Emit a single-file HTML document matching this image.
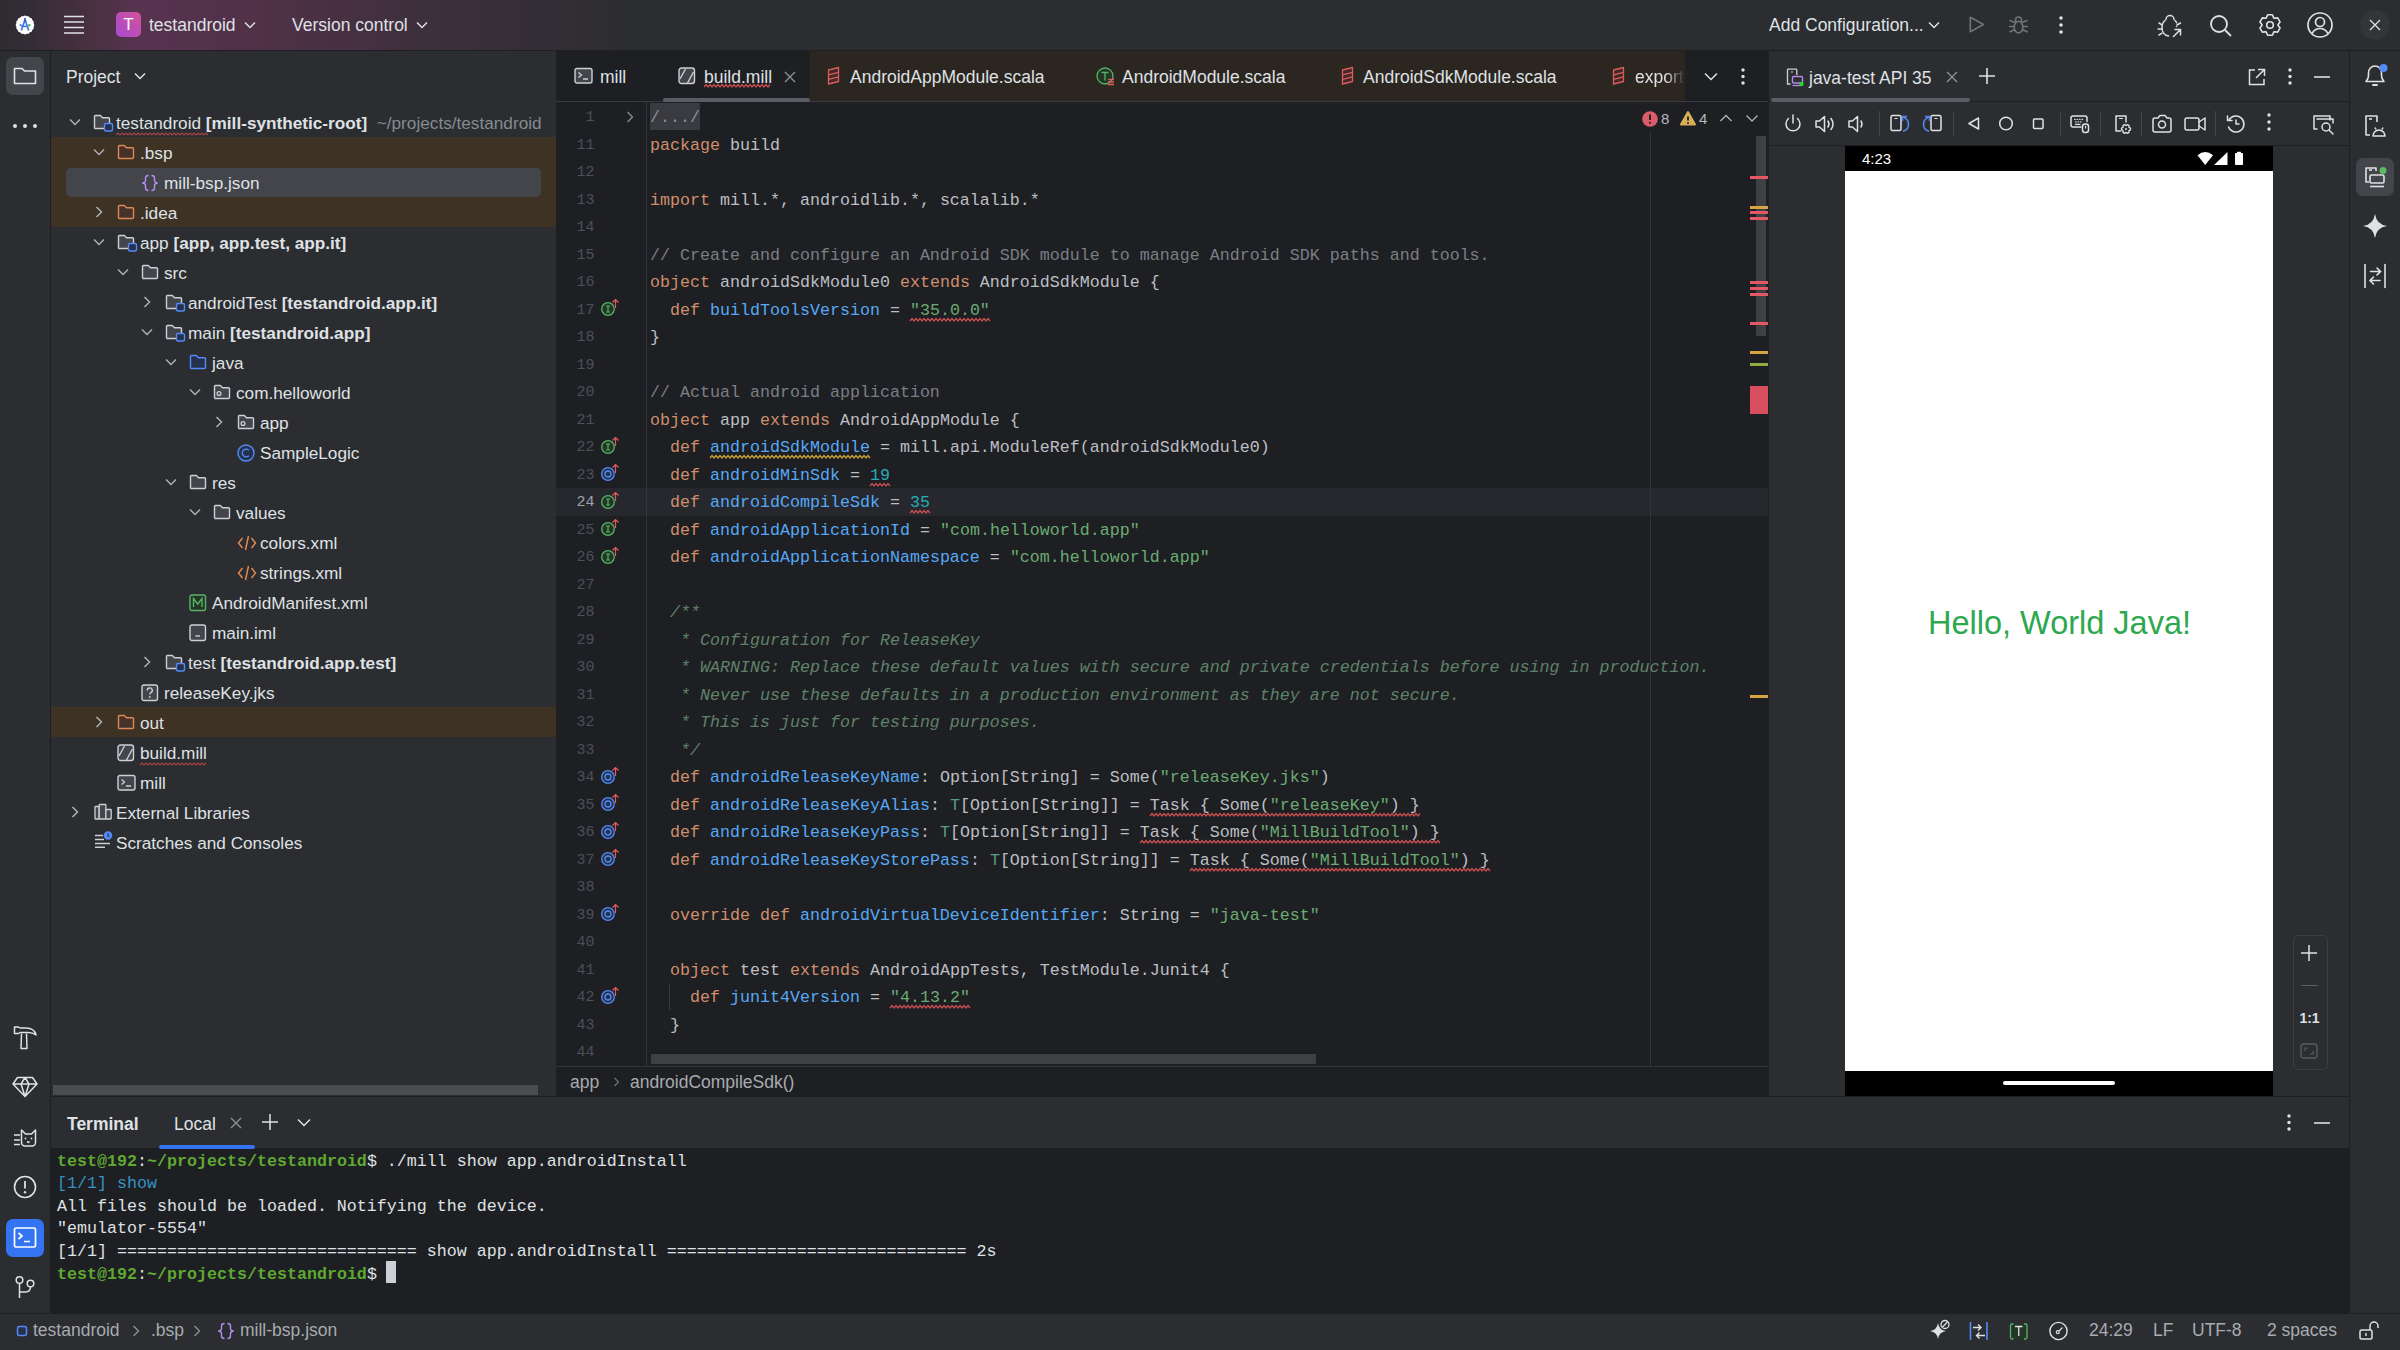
<!DOCTYPE html><html><head><meta charset="utf-8"><style>
*{margin:0;padding:0;box-sizing:border-box}
html,body{width:2400px;height:1350px;overflow:hidden;background:#2b2d30}
body{position:relative;font-family:"Liberation Sans",sans-serif;font-size:17.5px;color:#dfe1e5}
.a{position:absolute}
.mono{font-family:"Liberation Mono",monospace}
svg{position:absolute;overflow:visible}
#title{left:0;top:0;width:2400px;height:50px;background:#2b2d30}
#titlegrad{left:0;top:0;width:700px;height:50px;background:linear-gradient(90deg,#2d2c31 0px,#342d35 30px,#46303f 85px,#573350 135px,#4f3147 270px,#3d2f3c 430px,#2b2d30 640px)}
.hline{position:absolute;height:1px;background:#1e1f22}
.vline{position:absolute;width:1px;background:#1e1f22}
#lstripe{left:0;top:51px;width:50px;height:1263px;background:#2b2d30}
#proj{left:51px;top:51px;width:505px;height:1046px;background:#2b2d30;overflow:hidden}
#editor{left:556px;top:51px;width:1213px;height:1046px;background:#1e1f22;overflow:hidden}
#emu{left:1770px;top:51px;width:579px;height:1046px;background:#2b2d30;overflow:hidden}
#rstripe{left:2349px;top:51px;width:51px;height:1263px;background:#2b2d30}
#term{left:51px;top:1097px;width:2298px;height:217px;background:#1e1f22}
#status{left:0;top:1314px;width:2400px;height:36px;background:#2b2d30}
.row{position:absolute;left:0;height:30px;line-height:30px;white-space:pre;width:505px;font-size:17.2px}
.b{font-weight:bold}
.code{position:absolute;left:94px;white-space:pre;font-family:"Liberation Mono",monospace;font-size:16.67px;color:#bcbec4;height:27.5px;line-height:27.5px}
.ln{position:absolute;width:40px;text-align:right;font-family:"Liberation Mono",monospace;font-size:15px;color:#4b5059;height:27.5px;line-height:27.5px}
.k{color:#cf8e6d}.s{color:#6aab73}.n{color:#2aacb8}.f{color:#56a8f5}.c{color:#7a7e85}.d{color:#5f826b;font-style:italic}.t{color:#5a9c84}
.tline{position:absolute;left:6px;white-space:pre;font-family:"Liberation Mono",monospace;font-size:16.67px;color:#dfe1e5;height:22.6px;line-height:22.6px}
</style></head><body>
<div id="title" class="a"></div><div id="titlegrad" class="a"></div>
<div class="hline" style="left:0;top:50px;width:2400px"></div>
<svg style="left:0;top:0" width="50" height="50"><path d="M34.40 25.00 L33.63 26.72 L33.68 28.60 L32.32 29.89 L31.65 31.65 L29.89 32.32 L28.60 33.68 L26.72 33.63 L25.00 34.40 L23.28 33.63 L21.40 33.68 L20.11 32.32 L18.35 31.65 L17.68 29.89 L16.32 28.60 L16.37 26.72 L15.60 25.00 L16.37 23.28 L16.32 21.40 L17.68 20.11 L18.35 18.35 L20.11 17.68 L21.40 16.32 L23.28 16.37 L25.00 15.60 L26.72 16.37 L28.60 16.32 L29.89 17.68 L31.65 18.35 L32.32 20.11 L33.68 21.40 L33.63 23.28 Z" fill="#ffffff"/><path d="M21.3 30.5 L25 19.8 L28.7 30.5" stroke="#3b78e7" stroke-width="1.7" fill="none"/><path d="M19.8 24.3 q1.5 2.5 7.2 2" stroke="#3b78e7" stroke-width="1.5" fill="none"/><rect x="24" y="18" width="2" height="2.5" fill="#3b78e7"/><path d="M23.8 21 h2.4" stroke="#333" stroke-width="0.8"/><circle cx="29.3" cy="25.3" r="1.2" fill="#4caf50"/></svg>
<svg style="left:0;top:0" width="100" height="50"><g stroke="#dfe1e5" stroke-width="1.6"><path d="M64 16.5h20M64 22h20M64 27.5h20M64 33h20"/></g></svg>
<div class="a" style="left:116px;top:12px;width:25px;height:25px;border-radius:5px;background:linear-gradient(225deg,#d4509a,#a64bd0);color:#fff;font-size:17px;text-align:center;line-height:25px">T</div>
<div class="a" style="left:149px;top:13px;font-size:17.5px;line-height:24px">testandroid</div>
<svg style="left:244px;top:21px" width="12" height="8"><path d="M1 1.5 L6 6.5 L11 1.5" stroke="#dfe1e5" stroke-width="1.5" fill="none"/></svg>
<div class="a" style="left:292px;top:13px;font-size:17.5px;line-height:24px">Version control</div>
<svg style="left:416px;top:21px" width="12" height="8"><path d="M1 1.5 L6 6.5 L11 1.5" stroke="#dfe1e5" stroke-width="1.5" fill="none"/></svg>
<div class="a" style="left:1769px;top:13px;font-size:17.5px;line-height:24px">Add Configuration...</div>
<svg style="left:1928px;top:21px" width="12" height="8"><path d="M1 1.5 L6 6.5 L11 1.5" stroke="#dfe1e5" stroke-width="1.5" fill="none"/></svg>
<svg style="left:1966px;top:14px" width="22" height="22"><path d="M4.3 3.3 L17.5 10.5 L4.3 17.7 Z" stroke="#6f737a" stroke-width="1.7" fill="none" stroke-linejoin="round"/></svg>
<svg style="left:2007px;top:14px" width="24" height="24"><g stroke="#6f737a" stroke-width="1.6" fill="none" stroke-linecap="round"><path d="M8.5 7.5 v-1.5 a3 3 0 0 1 6 0 v1.5"/><ellipse cx="11.5" cy="13.2" rx="4.3" ry="5.8"/><path d="M3 6.5 L7.2 8.3 M20 6.5 L15.8 8.3 M2.5 12.5 H7 M16 12.5 H20.5 M3 17.8 L7.2 15.8 M20 17.8 L15.8 15.8"/></g></svg>
<svg style="left:2055px;top:14px" width="12" height="24"><g fill="#dfe1e5"><circle cx="6" cy="4" r="1.8"/><circle cx="6" cy="11" r="1.8"/><circle cx="6" cy="18" r="1.8"/></g></svg>
<svg style="left:2156px;top:12px" width="30" height="28"><g stroke="#dfe1e5" stroke-width="1.5" fill="none" stroke-linecap="round"><path d="M10 7.5 a4 4 0 0 1 8 0"/><path d="M9 8.5 c-2 1.5-3 4-3 7 c0 5 3 8 6.5 8.5"/><path d="M19 8.5 c0.7 0.6 1.2 1.3 1.6 2.2 M20.5 14.5 v0"/><path d="M3 11 l3 1.8 M2 17 h4 M3 23 l3-1.8 M24.5 11 l-3.5 2"/><path d="M17.5 24.5 L24.5 17.5 M19 17.5 h5.5 v5.5"/></g></svg>
<svg style="left:2207px;top:12px" width="28" height="28"><g stroke="#dfe1e5" stroke-width="1.8" fill="none"><circle cx="12" cy="12" r="8"/><path d="M18 18 L24 24"/></g></svg>
<svg style="left:2256px;top:11px" width="28" height="28"><g stroke="#dfe1e5" stroke-width="1.6" fill="none" stroke-linejoin="round"><path d="M10.24 6.94 L11.64 3.77 L16.36 3.77 L17.76 6.94 L18.24 7.22 L21.68 6.84 L24.04 10.93 L22.00 13.72 L22.00 14.28 L24.04 17.07 L21.68 21.16 L18.24 20.78 L17.76 21.06 L16.36 24.23 L11.64 24.23 L10.24 21.06 L9.76 20.78 L6.32 21.16 L3.96 17.07 L6.00 14.28 L6.00 13.72 L3.96 10.93 L6.32 6.84 L9.76 7.22 Z"/><circle cx="14" cy="14" r="3.3"/></g></svg>
<svg style="left:2305px;top:11px" width="30" height="30"><g stroke="#dfe1e5" stroke-width="1.7" fill="none"><circle cx="15" cy="14" r="12"/><circle cx="15" cy="11" r="4.5"/><path d="M7 22.5 c2-3.5 5-5 8-5 s6 1.5 8 5"/></g></svg>
<div class="a" style="left:2360px;top:10px;width:30px;height:30px;border-radius:15px;background:#333538"></div>
<svg style="left:2367px;top:17px" width="16" height="16"><path d="M3 3 L13 13 M13 3 L3 13" stroke="#dfe1e5" stroke-width="1.3"/></svg>
<div id="lstripe" class="a"></div><div class="vline" style="left:50px;top:51px;height:1263px"></div>
<div class="a" style="left:6px;top:57px;width:38px;height:38px;border-radius:7px;background:#43454a"></div>
<svg style="left:0;top:51px" width="50" height="50"><path d="M14.5 17.5 h7.5 l2.5 2.5 h11 v12.5 h-21 Z" stroke="#dfe1e5" stroke-width="1.6" fill="none" stroke-linejoin="round"/></svg>
<svg style="left:0;top:116px" width="50" height="20"><g fill="#dfe1e5"><circle cx="15" cy="10" r="2"/><circle cx="25" cy="10" r="2"/><circle cx="35" cy="10" r="2"/></g></svg>
<svg style="left:0;top:1020px" width="50" height="36"><g stroke="#dfe1e5" stroke-width="1.5" fill="none" stroke-linejoin="round"><path d="M14.5 7 h4 l1.5 1 h6 c5 0 9 2.5 10 7 c-2-1.5-4.5-2.5-7.5-2.5 h-8.5 l-1.5 1 h-4 Z"/><path d="M21.5 13.5 l-0.5 15 h6 l-0.5-15"/></g></svg>
<svg style="left:0;top:1070px" width="50" height="36"><g stroke="#dfe1e5" stroke-width="1.5" fill="none" stroke-linejoin="round"><path d="M17.5 7.5 H32.5 L37 14 L25 26.5 L13 14 Z M13 14 H37 M21 14 L25 7.5 L29 14 M21 14 L25 26.5 L29 14"/></g></svg>
<svg style="left:0;top:1120px" width="50" height="36"><g stroke="#dfe1e5" stroke-width="1.5" fill="none" stroke-linejoin="round"><path d="M21.5 10 L25.5 14 H31.5 L35.5 10 V22.5 a3.5 3.5 0 0 1 -3.5 3.5 H25 a3.5 3.5 0 0 1 -3.5-3.5 Z"/><path d="M14 15 h6 M14 20 h6 M14 24.5 h6"/><path d="M27 21.5 l1.3 1 l1.3-1"/></g><circle cx="25.5" cy="18.5" r="0.9" fill="#dfe1e5"/><circle cx="31.5" cy="18.5" r="0.9" fill="#dfe1e5"/></svg>
<svg style="left:0;top:1170px" width="50" height="36"><circle cx="25" cy="17" r="10.5" stroke="#dfe1e5" stroke-width="1.6" fill="none"/><path d="M25 11 v7.5" stroke="#dfe1e5" stroke-width="1.8"/><circle cx="25" cy="22.3" r="1.2" fill="#dfe1e5"/></svg>
<div class="a" style="left:6px;top:1219px;width:38px;height:38px;border-radius:7px;background:#3574f0"></div>
<svg style="left:0;top:1219px" width="50" height="38"><g stroke="#ffffff" stroke-width="1.7" fill="none"><rect x="14.5" y="9" width="21" height="19" rx="1.5"/><path d="M18.5 14 l3.5 3 l-3.5 3 M24 22.5 h6"/></g></svg>
<svg style="left:0;top:1270px" width="50" height="36"><g stroke="#dfe1e5" stroke-width="1.5" fill="none"><circle cx="19.5" cy="10" r="3.3"/><circle cx="30.5" cy="13.5" r="3.3"/><path d="M19.5 13.3 V28 M30.5 16.8 c0 3.2-2 5.2-5 5.2 H19.5"/></g></svg>
<div id="proj" class="a">
<div class="a" style="left:15px;top:14px;font-size:17.5px;line-height:24px">Project</div>
<svg style="left:83px;top:21px" width="12" height="8"><path d="M1 1.5 L6 6.5 L11 1.5" stroke="#dfe1e5" stroke-width="1.5" fill="none"/></svg>
<div class="a" style="left:0;top:86px;width:505px;height:90px;background:#3d3224"></div>
<div class="a" style="left:0;top:656px;width:505px;height:30px;background:#3d3224"></div>
<div class="a" style="left:15px;top:117px;width:475px;height:29px;border-radius:5px;background:#43454a"></div>
<svg style="left:18px;top:67px" width="12" height="8"><path d="M1 1.5 L6 6.5 L11 1.5" stroke="#aeb0b6" stroke-width="1.5" fill="none"/></svg>
<svg style="left:42px;top:63px" width="20" height="18"><path d="M1.5 2.5 a1 1 0 0 1 1-1 h4.8 l2.2 2.2 h6 a1 1 0 0 1 1 1 v8.8 a1 1 0 0 1 -1 1 h-13 a1 1 0 0 1 -1-1 Z" stroke="#ced0d6" stroke-width="1.4" fill="#43454a" stroke-linejoin="round"/><rect x="11.5" y="9.5" width="8" height="7.5" rx="1.5" fill="#25324d" stroke="#548af7" stroke-width="1.4"/></svg>
<div class="row" style="left:65px;top:57px">testandroid<span class="b"> [mill-synthetic-root]</span><span style="color:#868a91">  ~/projects/testandroid</span></div>
<svg style="left:42px;top:97px" width="12" height="8"><path d="M1 1.5 L6 6.5 L11 1.5" stroke="#aeb0b6" stroke-width="1.5" fill="none"/></svg>
<svg style="left:66px;top:93px" width="20" height="18"><path d="M1.5 2.5 a1 1 0 0 1 1-1 h4.8 l2.2 2.2 h6 a1 1 0 0 1 1 1 v8.8 a1 1 0 0 1 -1 1 h-13 a1 1 0 0 1 -1-1 Z" stroke="#e08855" stroke-width="1.4" fill="#45322b" stroke-linejoin="round"/></svg>
<div class="row" style="left:89px;top:87px">.bsp</div>
<svg style="left:90px;top:123px" width="20" height="18"><path d="M7.5 1.5 c-2 0-3 0.8-3 2.5 v2.5 c0 1.3-0.9 2.2-2.8 2.5 c1.9 0.3 2.8 1.2 2.8 2.5 v2.5 c0 1.7 1 2.5 3 2.5 M10.5 1.5 c2 0 3 0.8 3 2.5 v2.5 c0 1.3 0.9 2.2 2.8 2.5 c-1.9 0.3-2.8 1.2-2.8 2.5 v2.5 c0 1.7-1 2.5-3 2.5" stroke="#b68bf0" stroke-width="1.4" fill="none" stroke-linejoin="round"/></svg>
<div class="row" style="left:113px;top:117px">mill-bsp.json</div>
<svg style="left:44px;top:155px" width="8" height="12"><path d="M1.5 1 L6.5 6 L1.5 11" stroke="#aeb0b6" stroke-width="1.5" fill="none"/></svg>
<svg style="left:66px;top:153px" width="20" height="18"><path d="M1.5 2.5 a1 1 0 0 1 1-1 h4.8 l2.2 2.2 h6 a1 1 0 0 1 1 1 v8.8 a1 1 0 0 1 -1 1 h-13 a1 1 0 0 1 -1-1 Z" stroke="#e08855" stroke-width="1.4" fill="#45322b" stroke-linejoin="round"/></svg>
<div class="row" style="left:89px;top:147px">.idea</div>
<svg style="left:42px;top:187px" width="12" height="8"><path d="M1 1.5 L6 6.5 L11 1.5" stroke="#aeb0b6" stroke-width="1.5" fill="none"/></svg>
<svg style="left:66px;top:183px" width="20" height="18"><path d="M1.5 2.5 a1 1 0 0 1 1-1 h4.8 l2.2 2.2 h6 a1 1 0 0 1 1 1 v8.8 a1 1 0 0 1 -1 1 h-13 a1 1 0 0 1 -1-1 Z" stroke="#ced0d6" stroke-width="1.4" fill="#43454a" stroke-linejoin="round"/><rect x="11.5" y="9.5" width="8" height="7.5" rx="1.5" fill="#25324d" stroke="#548af7" stroke-width="1.4"/></svg>
<div class="row" style="left:89px;top:177px">app<span class="b"> [app, app.test, app.it]</span></div>
<svg style="left:66px;top:217px" width="12" height="8"><path d="M1 1.5 L6 6.5 L11 1.5" stroke="#aeb0b6" stroke-width="1.5" fill="none"/></svg>
<svg style="left:90px;top:213px" width="20" height="18"><path d="M1.5 2.5 a1 1 0 0 1 1-1 h4.8 l2.2 2.2 h6 a1 1 0 0 1 1 1 v8.8 a1 1 0 0 1 -1 1 h-13 a1 1 0 0 1 -1-1 Z" stroke="#ced0d6" stroke-width="1.4" fill="#43454a" stroke-linejoin="round"/></svg>
<div class="row" style="left:113px;top:207px">src</div>
<svg style="left:92px;top:245px" width="8" height="12"><path d="M1.5 1 L6.5 6 L1.5 11" stroke="#aeb0b6" stroke-width="1.5" fill="none"/></svg>
<svg style="left:114px;top:243px" width="20" height="18"><path d="M1.5 2.5 a1 1 0 0 1 1-1 h4.8 l2.2 2.2 h6 a1 1 0 0 1 1 1 v8.8 a1 1 0 0 1 -1 1 h-13 a1 1 0 0 1 -1-1 Z" stroke="#ced0d6" stroke-width="1.4" fill="#43454a" stroke-linejoin="round"/><rect x="11.5" y="9.5" width="8" height="7.5" rx="1.5" fill="#25324d" stroke="#548af7" stroke-width="1.4"/></svg>
<div class="row" style="left:137px;top:237px">androidTest<span class="b"> [testandroid.app.it]</span></div>
<svg style="left:90px;top:277px" width="12" height="8"><path d="M1 1.5 L6 6.5 L11 1.5" stroke="#aeb0b6" stroke-width="1.5" fill="none"/></svg>
<svg style="left:114px;top:273px" width="20" height="18"><path d="M1.5 2.5 a1 1 0 0 1 1-1 h4.8 l2.2 2.2 h6 a1 1 0 0 1 1 1 v8.8 a1 1 0 0 1 -1 1 h-13 a1 1 0 0 1 -1-1 Z" stroke="#ced0d6" stroke-width="1.4" fill="#43454a" stroke-linejoin="round"/><rect x="11.5" y="9.5" width="8" height="7.5" rx="1.5" fill="#25324d" stroke="#548af7" stroke-width="1.4"/></svg>
<div class="row" style="left:137px;top:267px">main<span class="b"> [testandroid.app]</span></div>
<svg style="left:114px;top:307px" width="12" height="8"><path d="M1 1.5 L6 6.5 L11 1.5" stroke="#aeb0b6" stroke-width="1.5" fill="none"/></svg>
<svg style="left:138px;top:303px" width="20" height="18"><path d="M1.5 2.5 a1 1 0 0 1 1-1 h4.8 l2.2 2.2 h6 a1 1 0 0 1 1 1 v8.8 a1 1 0 0 1 -1 1 h-13 a1 1 0 0 1 -1-1 Z" stroke="#548af7" stroke-width="1.4" fill="#25324d" stroke-linejoin="round"/></svg>
<div class="row" style="left:161px;top:297px">java</div>
<svg style="left:138px;top:337px" width="12" height="8"><path d="M1 1.5 L6 6.5 L11 1.5" stroke="#aeb0b6" stroke-width="1.5" fill="none"/></svg>
<svg style="left:162px;top:333px" width="20" height="18"><path d="M1.5 2.5 a1 1 0 0 1 1-1 h4.8 l2.2 2.2 h6 a1 1 0 0 1 1 1 v8.8 a1 1 0 0 1 -1 1 h-13 a1 1 0 0 1 -1-1 Z" stroke="#ced0d6" stroke-width="1.4" fill="#43454a" stroke-linejoin="round"/><circle cx="6" cy="9.5" r="1.9" fill="none" stroke="#ced0d6" stroke-width="1.3"/></svg>
<div class="row" style="left:185px;top:327px">com.helloworld</div>
<svg style="left:164px;top:365px" width="8" height="12"><path d="M1.5 1 L6.5 6 L1.5 11" stroke="#aeb0b6" stroke-width="1.5" fill="none"/></svg>
<svg style="left:186px;top:363px" width="20" height="18"><path d="M1.5 2.5 a1 1 0 0 1 1-1 h4.8 l2.2 2.2 h6 a1 1 0 0 1 1 1 v8.8 a1 1 0 0 1 -1 1 h-13 a1 1 0 0 1 -1-1 Z" stroke="#ced0d6" stroke-width="1.4" fill="#43454a" stroke-linejoin="round"/><circle cx="6" cy="9.5" r="1.9" fill="none" stroke="#ced0d6" stroke-width="1.3"/></svg>
<div class="row" style="left:209px;top:357px">app</div>
<svg style="left:186px;top:393px" width="20" height="20"><circle cx="9" cy="9" r="8" fill="#25324d" stroke="#548af7" stroke-width="1.4"/><path d="M11.8 6.3 a3.8 3.8 0 1 0 0 5.4" stroke="#548af7" stroke-width="1.4" fill="none"/></svg>
<div class="row" style="left:209px;top:387px">SampleLogic</div>
<svg style="left:114px;top:427px" width="12" height="8"><path d="M1 1.5 L6 6.5 L11 1.5" stroke="#aeb0b6" stroke-width="1.5" fill="none"/></svg>
<svg style="left:138px;top:423px" width="20" height="18"><path d="M1.5 2.5 a1 1 0 0 1 1-1 h4.8 l2.2 2.2 h6 a1 1 0 0 1 1 1 v8.8 a1 1 0 0 1 -1 1 h-13 a1 1 0 0 1 -1-1 Z" stroke="#ced0d6" stroke-width="1.4" fill="#43454a" stroke-linejoin="round"/></svg>
<div class="row" style="left:161px;top:417px">res</div>
<svg style="left:138px;top:457px" width="12" height="8"><path d="M1 1.5 L6 6.5 L11 1.5" stroke="#aeb0b6" stroke-width="1.5" fill="none"/></svg>
<svg style="left:162px;top:453px" width="20" height="18"><path d="M1.5 2.5 a1 1 0 0 1 1-1 h4.8 l2.2 2.2 h6 a1 1 0 0 1 1 1 v8.8 a1 1 0 0 1 -1 1 h-13 a1 1 0 0 1 -1-1 Z" stroke="#ced0d6" stroke-width="1.4" fill="#43454a" stroke-linejoin="round"/></svg>
<div class="row" style="left:185px;top:447px">values</div>
<svg style="left:186px;top:483px" width="22" height="18"><path d="M5.5 4 L1.5 9 L5.5 14 M14.5 4 L18.5 9 L14.5 14 M11.5 2 L8.5 16" stroke="#e08855" stroke-width="1.5" fill="none"/></svg>
<div class="row" style="left:209px;top:477px">colors.xml</div>
<svg style="left:186px;top:513px" width="22" height="18"><path d="M5.5 4 L1.5 9 L5.5 14 M14.5 4 L18.5 9 L14.5 14 M11.5 2 L8.5 16" stroke="#e08855" stroke-width="1.5" fill="none"/></svg>
<div class="row" style="left:209px;top:507px">strings.xml</div>
<svg style="left:138px;top:543px" width="20" height="18"><rect x="1" y="1" width="15.5" height="15.5" rx="2" fill="#253627" stroke="#55b467" stroke-width="1.4"/><path d="M4.5 13 V4.5 L8.75 10 L13 4.5 V13" stroke="#55b467" stroke-width="1.4" fill="none"/></svg>
<div class="row" style="left:161px;top:537px">AndroidManifest.xml</div>
<svg style="left:138px;top:573px" width="20" height="18"><rect x="1" y="1" width="15.5" height="15.5" rx="2" fill="#43454a" stroke="#ced0d6" stroke-width="1.4"/><path d="M6.5 12 h4.5" stroke="#ced0d6" stroke-width="1.4"/></svg>
<div class="row" style="left:161px;top:567px">main.iml</div>
<svg style="left:92px;top:605px" width="8" height="12"><path d="M1.5 1 L6.5 6 L1.5 11" stroke="#aeb0b6" stroke-width="1.5" fill="none"/></svg>
<svg style="left:114px;top:603px" width="20" height="18"><path d="M1.5 2.5 a1 1 0 0 1 1-1 h4.8 l2.2 2.2 h6 a1 1 0 0 1 1 1 v8.8 a1 1 0 0 1 -1 1 h-13 a1 1 0 0 1 -1-1 Z" stroke="#ced0d6" stroke-width="1.4" fill="#43454a" stroke-linejoin="round"/><rect x="11.5" y="9.5" width="8" height="7.5" rx="1.5" fill="#25324d" stroke="#548af7" stroke-width="1.4"/></svg>
<div class="row" style="left:137px;top:597px">test<span class="b"> [testandroid.app.test]</span></div>
<svg style="left:90px;top:633px" width="20" height="18"><rect x="1" y="1" width="15.5" height="15.5" rx="2" fill="#43454a" stroke="#ced0d6" stroke-width="1.4"/><path d="M6.3 6.5 a2.5 2.5 0 1 1 3.5 2.2 c-0.8 0.4-1 0.9-1 1.8" stroke="#ced0d6" stroke-width="1.4" fill="none"/><circle cx="8.8" cy="13" r="0.9" fill="#ced0d6"/></svg>
<div class="row" style="left:113px;top:627px">releaseKey.jks</div>
<svg style="left:44px;top:665px" width="8" height="12"><path d="M1.5 1 L6.5 6 L1.5 11" stroke="#aeb0b6" stroke-width="1.5" fill="none"/></svg>
<svg style="left:66px;top:663px" width="20" height="18"><path d="M1.5 2.5 a1 1 0 0 1 1-1 h4.8 l2.2 2.2 h6 a1 1 0 0 1 1 1 v8.8 a1 1 0 0 1 -1 1 h-13 a1 1 0 0 1 -1-1 Z" stroke="#e08855" stroke-width="1.4" fill="#45322b" stroke-linejoin="round"/></svg>
<div class="row" style="left:89px;top:657px">out</div>
<svg style="left:66px;top:693px" width="20" height="18"><rect x="1" y="1" width="15.5" height="15.5" rx="2.5" fill="#43454a" stroke="#ced0d6" stroke-width="1.4"/><path d="M2 12 L7.5 2 M9.5 16 L15.5 5" stroke="#ced0d6" stroke-width="1.4"/></svg>
<div class="row" style="left:89px;top:687px">build.mill</div>
<svg style="left:66px;top:723px" width="20" height="18"><rect x="1" y="1.5" width="17" height="14.5" rx="2" fill="#43454a" stroke="#ced0d6" stroke-width="1.4"/><path d="M4.5 5.5 l3 2.5 l-3 2.5 M9 12 h5" stroke="#ced0d6" stroke-width="1.3" fill="none"/></svg>
<div class="row" style="left:89px;top:717px">mill</div>
<svg style="left:20px;top:755px" width="8" height="12"><path d="M1.5 1 L6.5 6 L1.5 11" stroke="#aeb0b6" stroke-width="1.5" fill="none"/></svg>
<svg style="left:42px;top:753px" width="20" height="20"><g stroke="#ced0d6" stroke-width="1.3" fill="#43454a" stroke-linejoin="round"><rect x="2" y="2.5" width="4.2" height="12.5" rx="0.5"/><rect x="6.2" y="0.5" width="6.7" height="14.5" rx="0.5"/><rect x="12.9" y="5.5" width="5.3" height="9.5" rx="0.5"/></g></svg>
<div class="row" style="left:65px;top:747px">External Libraries</div>
<svg style="left:42px;top:783px" width="22" height="20"><path d="M2 1.5 h8 M2 5.5 h9 M2 9.5 h15 M2 13.2 h10" stroke="#ced0d6" stroke-width="1.4"/><circle cx="15" cy="1.5" r="4.2" fill="#548af7"/><path d="M15 -0.8 v2.5 l1.3 1.2" stroke="#2b2d30" stroke-width="1.1" fill="none"/></svg>
<div class="row" style="left:65px;top:777px">Scratches and Consoles</div>
<svg style="left:65px;top:81px" width="93" height="5"><path d="M0 3 l2 -2 l2 2 l2 -2 l2 2 l2 -2 l2 2 l2 -2 l2 2 l2 -2 l2 2 l2 -2 l2 2 l2 -2 l2 2 l2 -2 l2 2 l2 -2 l2 2 l2 -2 l2 2 l2 -2 l2 2 l2 -2 l2 2 l2 -2 l2 2 l2 -2 l2 2 l2 -2 l2 2 l2 -2 l2 2 l2 -2 l2 2 l2 -2 l2 2 l2 -2 l2 2 l2 -2 l2 2 l2 -2 l2 2 l2 -2 l2 2 l2 -2 l2 2" stroke="#a84444" stroke-width="1.1" fill="none"/></svg>
<svg style="left:89px;top:711px" width="66" height="5"><path d="M0 3 l2 -2 l2 2 l2 -2 l2 2 l2 -2 l2 2 l2 -2 l2 2 l2 -2 l2 2 l2 -2 l2 2 l2 -2 l2 2 l2 -2 l2 2 l2 -2 l2 2 l2 -2 l2 2 l2 -2 l2 2 l2 -2 l2 2 l2 -2 l2 2 l2 -2 l2 2 l2 -2 l2 2 l2 -2 l2 2 l2 -2" stroke="#a84444" stroke-width="1.1" fill="none"/></svg>
<div class="a" style="left:2px;top:1034px;width:485px;height:10px;background:#4a4c50"></div>
</div>
<div id="editor" class="a">
<div class="a" style="left:254px;top:0;width:875px;height:50px;background:#2c2620"></div>
<div class="a" style="left:0;top:50px;width:1213px;height:1px;background:#393b40"></div>
<div class="a" style="left:107px;top:47px;width:147px;height:4px;border-radius:2px;background:#5a5d63"></div>
<svg style="left:18px;top:16px" width="20" height="18"><rect x="1" y="1.5" width="17" height="14.5" rx="2" fill="#43454a" stroke="#ced0d6" stroke-width="1.4"/><path d="M4.5 5.5 l3 2.5 l-3 2.5 M9 12 h5" stroke="#ced0d6" stroke-width="1.3" fill="none"/></svg>
<div class="a" style="left:44px;top:14px;line-height:24px">mill</div>
<svg style="left:122px;top:16px" width="20" height="18"><rect x="1" y="1" width="15.5" height="15.5" rx="2.5" fill="#43454a" stroke="#ced0d6" stroke-width="1.4"/><path d="M2 12 L7.5 2 M9.5 16 L15.5 5" stroke="#ced0d6" stroke-width="1.4"/></svg>
<div class="a" style="left:148px;top:14px;line-height:24px">build.mill</div>
<svg style="left:148px;top:33px" width="67" height="5"><path d="M0 3 l2 -2.5 l2 2.5 l2 -2.5 l2 2.5 l2 -2.5 l2 2.5 l2 -2.5 l2 2.5 l2 -2.5 l2 2.5 l2 -2.5 l2 2.5 l2 -2.5 l2 2.5 l2 -2.5 l2 2.5 l2 -2.5 l2 2.5 l2 -2.5 l2 2.5 l2 -2.5 l2 2.5 l2 -2.5 l2 2.5 l2 -2.5 l2 2.5 l2 -2.5 l2 2.5 l2 -2.5 l2 2.5 l2 -2.5 l2 2.5 l2 -2.5" stroke="#c94f4f" stroke-width="1.3" fill="none"/></svg>
<svg style="left:227px;top:19px" width="14" height="14"><path d="M2 2 L12 12 M12 2 L2 12" stroke="#8c8f94" stroke-width="1.4"/></svg>
<svg style="left:270px;top:15px" width="16" height="20"><path d="M2.5 4 L12.5 1.5 V15.5 L2.5 18 Z" stroke="#db5c5c" stroke-width="1.3" fill="#45282a" stroke-linejoin="round"/><path d="M2.5 8.8 L12.5 6.3 M2.5 13.3 L12.5 10.8" stroke="#db5c5c" stroke-width="1.3"/></svg>
<div class="a" style="left:294px;top:14px;line-height:24px">AndroidAppModule.scala</div>
<svg style="left:540px;top:16px" width="22" height="20"><circle cx="9" cy="9" r="8" fill="#253627" stroke="#55b467" stroke-width="1.3"/><path d="M5.5 5.5 h7 M9 5.5 v8" stroke="#55b467" stroke-width="1.3"/><path d="M12 12.5 h6 M12 15 h6 M12 17.5 h6" stroke="#db5c5c" stroke-width="1.3"/></svg>
<div class="a" style="left:566px;top:14px;line-height:24px">AndroidModule.scala</div>
<svg style="left:784px;top:15px" width="16" height="20"><path d="M2.5 4 L12.5 1.5 V15.5 L2.5 18 Z" stroke="#db5c5c" stroke-width="1.3" fill="#45282a" stroke-linejoin="round"/><path d="M2.5 8.8 L12.5 6.3 M2.5 13.3 L12.5 10.8" stroke="#db5c5c" stroke-width="1.3"/></svg>
<div class="a" style="left:807px;top:14px;line-height:24px">AndroidSdkModule.scala</div>
<svg style="left:1055px;top:15px" width="16" height="20"><path d="M2.5 4 L12.5 1.5 V15.5 L2.5 18 Z" stroke="#db5c5c" stroke-width="1.3" fill="#45282a" stroke-linejoin="round"/><path d="M2.5 8.8 L12.5 6.3 M2.5 13.3 L12.5 10.8" stroke="#db5c5c" stroke-width="1.3"/></svg>
<div class="a" style="left:1079px;top:14px;line-height:24px;width:50px;overflow:hidden;white-space:pre;-webkit-mask-image:linear-gradient(90deg,#000 60%,transparent)">exports.scala</div>
<svg style="left:1148px;top:21px" width="14" height="9"><path d="M1 1.5 L7 7.5 L13 1.5" stroke="#dfe1e5" stroke-width="1.5" fill="none"/></svg>
<svg style="left:1181px;top:13px" width="12" height="24"><g fill="#dfe1e5"><circle cx="6" cy="6" r="1.7"/><circle cx="6" cy="12.5" r="1.7"/><circle cx="6" cy="19" r="1.7"/></g></svg>
<div class="a" style="left:0;top:437.25px;width:1213px;height:27.5px;background:#26282e"></div>
<div class="a" style="left:90px;top:51px;width:1px;height:964px;background:#313438"></div>
<div class="a" style="left:1094px;top:51px;width:1px;height:964px;background:#313438"></div>
<div class="a" style="left:1080px;top:51px;width:126px;height:30px;background:#1e1f22"></div>
<div class="a" style="left:94px;top:52px;width:50px;height:27px;background:#393b40"></div>
<svg style="left:70px;top:60px" width="8" height="12"><path d="M1.5 1 L6.5 6 L1.5 11" stroke="#868a91" stroke-width="1.4" fill="none"/></svg>
<div class="ln" style="left:-1.5px;top:53.25px;color:#4b5059">1</div>
<div class="code" style="top:53.25px"><span style="color:#8c8f94">/.../</span></div>
<div class="ln" style="left:-1.5px;top:80.75px;color:#4b5059">11</div>
<div class="code" style="top:80.75px"><span class="k">package</span> build</div>
<div class="ln" style="left:-1.5px;top:108.25px;color:#4b5059">12</div>
<div class="code" style="top:108.25px"></div>
<div class="ln" style="left:-1.5px;top:135.75px;color:#4b5059">13</div>
<div class="code" style="top:135.75px"><span class="k">import</span> mill.*, androidlib.*, scalalib.*</div>
<div class="ln" style="left:-1.5px;top:163.25px;color:#4b5059">14</div>
<div class="code" style="top:163.25px"></div>
<div class="ln" style="left:-1.5px;top:190.75px;color:#4b5059">15</div>
<div class="code" style="top:190.75px"><span class="c">// Create and configure an Android SDK module to manage Android SDK paths and tools.</span></div>
<div class="ln" style="left:-1.5px;top:218.25px;color:#4b5059">16</div>
<div class="code" style="top:218.25px"><span class="k">object</span> androidSdkModule0 <span class="k">extends</span> AndroidSdkModule {</div>
<div class="ln" style="left:-1.5px;top:245.75px;color:#4b5059">17</div>
<div class="code" style="top:245.75px"><span class="k">  def</span> <span class="f">buildToolsVersion</span> = <span class="s">&quot;35.0.0&quot;</span></div>
<div class="ln" style="left:-1.5px;top:273.25px;color:#4b5059">18</div>
<div class="code" style="top:273.25px">}</div>
<div class="ln" style="left:-1.5px;top:300.75px;color:#4b5059">19</div>
<div class="code" style="top:300.75px"></div>
<div class="ln" style="left:-1.5px;top:328.25px;color:#4b5059">20</div>
<div class="code" style="top:328.25px"><span class="c">// Actual android application</span></div>
<div class="ln" style="left:-1.5px;top:355.75px;color:#4b5059">21</div>
<div class="code" style="top:355.75px"><span class="k">object</span> app <span class="k">extends</span> AndroidAppModule {</div>
<div class="ln" style="left:-1.5px;top:383.25px;color:#4b5059">22</div>
<div class="code" style="top:383.25px"><span class="k">  def</span> <span class="f">androidSdkModule</span> = mill.api.ModuleRef(androidSdkModule0)</div>
<div class="ln" style="left:-1.5px;top:410.75px;color:#4b5059">23</div>
<div class="code" style="top:410.75px"><span class="k">  def</span> <span class="f">androidMinSdk</span> = <span class="n">19</span></div>
<div class="ln" style="left:-1.5px;top:438.25px;color:#a1a3ab">24</div>
<div class="code" style="top:438.25px"><span class="k">  def</span> <span class="f">androidCompileSdk</span> = <span class="n">35</span></div>
<div class="ln" style="left:-1.5px;top:465.75px;color:#4b5059">25</div>
<div class="code" style="top:465.75px"><span class="k">  def</span> <span class="f">androidApplicationId</span> = <span class="s">&quot;com.helloworld.app&quot;</span></div>
<div class="ln" style="left:-1.5px;top:493.25px;color:#4b5059">26</div>
<div class="code" style="top:493.25px"><span class="k">  def</span> <span class="f">androidApplicationNamespace</span> = <span class="s">&quot;com.helloworld.app&quot;</span></div>
<div class="ln" style="left:-1.5px;top:520.75px;color:#4b5059">27</div>
<div class="code" style="top:520.75px"></div>
<div class="ln" style="left:-1.5px;top:548.25px;color:#4b5059">28</div>
<div class="code" style="top:548.25px"><span class="d">  /**</span></div>
<div class="ln" style="left:-1.5px;top:575.75px;color:#4b5059">29</div>
<div class="code" style="top:575.75px"><span class="d">   * Configuration for ReleaseKey</span></div>
<div class="ln" style="left:-1.5px;top:603.25px;color:#4b5059">30</div>
<div class="code" style="top:603.25px"><span class="d">   * WARNING: Replace these default values with secure and private credentials before using in production.</span></div>
<div class="ln" style="left:-1.5px;top:630.75px;color:#4b5059">31</div>
<div class="code" style="top:630.75px"><span class="d">   * Never use these defaults in a production environment as they are not secure.</span></div>
<div class="ln" style="left:-1.5px;top:658.25px;color:#4b5059">32</div>
<div class="code" style="top:658.25px"><span class="d">   * This is just for testing purposes.</span></div>
<div class="ln" style="left:-1.5px;top:685.75px;color:#4b5059">33</div>
<div class="code" style="top:685.75px"><span class="d">   */</span></div>
<div class="ln" style="left:-1.5px;top:713.25px;color:#4b5059">34</div>
<div class="code" style="top:713.25px"><span class="k">  def</span> <span class="f">androidReleaseKeyName</span>: Option[String] = Some(<span class="s">&quot;releaseKey.jks&quot;</span>)</div>
<div class="ln" style="left:-1.5px;top:740.75px;color:#4b5059">35</div>
<div class="code" style="top:740.75px"><span class="k">  def</span> <span class="f">androidReleaseKeyAlias</span>: <span class="t">T</span>[Option[String]] = Task { Some(<span class="s">&quot;releaseKey&quot;</span>) }</div>
<div class="ln" style="left:-1.5px;top:768.25px;color:#4b5059">36</div>
<div class="code" style="top:768.25px"><span class="k">  def</span> <span class="f">androidReleaseKeyPass</span>: <span class="t">T</span>[Option[String]] = Task { Some(<span class="s">&quot;MillBuildTool&quot;</span>) }</div>
<div class="ln" style="left:-1.5px;top:795.75px;color:#4b5059">37</div>
<div class="code" style="top:795.75px"><span class="k">  def</span> <span class="f">androidReleaseKeyStorePass</span>: <span class="t">T</span>[Option[String]] = Task { Some(<span class="s">&quot;MillBuildTool&quot;</span>) }</div>
<div class="ln" style="left:-1.5px;top:823.25px;color:#4b5059">38</div>
<div class="code" style="top:823.25px"></div>
<div class="ln" style="left:-1.5px;top:850.75px;color:#4b5059">39</div>
<div class="code" style="top:850.75px"><span class="k">  override def</span> <span class="f">androidVirtualDeviceIdentifier</span>: String = <span class="s">&quot;java-test&quot;</span></div>
<div class="ln" style="left:-1.5px;top:878.25px;color:#4b5059">40</div>
<div class="code" style="top:878.25px"></div>
<div class="ln" style="left:-1.5px;top:905.75px;color:#4b5059">41</div>
<div class="code" style="top:905.75px"><span class="k">  object</span> test <span class="k">extends</span> AndroidAppTests, TestModule.Junit4 {</div>
<div class="ln" style="left:-1.5px;top:933.25px;color:#4b5059">42</div>
<div class="code" style="top:933.25px"><span class="k">    def</span> <span class="f">junit4Version</span> = <span class="s">&quot;4.13.2&quot;</span></div>
<div class="ln" style="left:-1.5px;top:960.75px;color:#4b5059">43</div>
<div class="code" style="top:960.75px">  }</div>
<div class="ln" style="left:-1.5px;top:988.25px;color:#4b5059">44</div>
<div class="code" style="top:988.25px"></div>
<div class="a" style="left:113px;top:932.25px;width:1px;height:27px;background:#393b40"></div>
<svg style="left:44px;top:247px" width="22" height="20"><circle cx="8" cy="11" r="6.3" fill="#253627" stroke="#55b467" stroke-width="1.3"/><path d="M6 8 h4 M8 8 v6 M6 14 h4" stroke="#55b467" stroke-width="1.2"/><path d="M15.5 10 V1.5 M12.5 4.5 L15.5 1.5 L18.5 4.5" stroke="#e05c5c" stroke-width="1.2" fill="none"/></svg>
<svg style="left:44px;top:385px" width="22" height="20"><circle cx="8" cy="11" r="6.3" fill="#253627" stroke="#55b467" stroke-width="1.3"/><path d="M6 8 h4 M8 8 v6 M6 14 h4" stroke="#55b467" stroke-width="1.2"/><path d="M15.5 10 V1.5 M12.5 4.5 L15.5 1.5 L18.5 4.5" stroke="#e05c5c" stroke-width="1.2" fill="none"/></svg>
<svg style="left:44px;top:412px" width="22" height="20"><circle cx="8" cy="11" r="6.3" fill="#25324d" stroke="#548af7" stroke-width="1.3"/><circle cx="8" cy="11" r="3" fill="#25324d" stroke="#548af7" stroke-width="1.3"/><path d="M15.5 10 V1.5 M12.5 4.5 L15.5 1.5 L18.5 4.5" stroke="#e05c5c" stroke-width="1.2" fill="none"/></svg>
<svg style="left:44px;top:440px" width="22" height="20"><circle cx="8" cy="11" r="6.3" fill="#253627" stroke="#55b467" stroke-width="1.3"/><path d="M6 8 h4 M8 8 v6 M6 14 h4" stroke="#55b467" stroke-width="1.2"/><path d="M15.5 10 V1.5 M12.5 4.5 L15.5 1.5 L18.5 4.5" stroke="#e05c5c" stroke-width="1.2" fill="none"/></svg>
<svg style="left:44px;top:467px" width="22" height="20"><circle cx="8" cy="11" r="6.3" fill="#253627" stroke="#55b467" stroke-width="1.3"/><path d="M6 8 h4 M8 8 v6 M6 14 h4" stroke="#55b467" stroke-width="1.2"/><path d="M15.5 10 V1.5 M12.5 4.5 L15.5 1.5 L18.5 4.5" stroke="#e05c5c" stroke-width="1.2" fill="none"/></svg>
<svg style="left:44px;top:495px" width="22" height="20"><circle cx="8" cy="11" r="6.3" fill="#253627" stroke="#55b467" stroke-width="1.3"/><path d="M6 8 h4 M8 8 v6 M6 14 h4" stroke="#55b467" stroke-width="1.2"/><path d="M15.5 10 V1.5 M12.5 4.5 L15.5 1.5 L18.5 4.5" stroke="#e05c5c" stroke-width="1.2" fill="none"/></svg>
<svg style="left:44px;top:715px" width="22" height="20"><circle cx="8" cy="11" r="6.3" fill="#25324d" stroke="#548af7" stroke-width="1.3"/><circle cx="8" cy="11" r="3" fill="#25324d" stroke="#548af7" stroke-width="1.3"/><path d="M15.5 10 V1.5 M12.5 4.5 L15.5 1.5 L18.5 4.5" stroke="#e05c5c" stroke-width="1.2" fill="none"/></svg>
<svg style="left:44px;top:742px" width="22" height="20"><circle cx="8" cy="11" r="6.3" fill="#25324d" stroke="#548af7" stroke-width="1.3"/><circle cx="8" cy="11" r="3" fill="#25324d" stroke="#548af7" stroke-width="1.3"/><path d="M15.5 10 V1.5 M12.5 4.5 L15.5 1.5 L18.5 4.5" stroke="#e05c5c" stroke-width="1.2" fill="none"/></svg>
<svg style="left:44px;top:770px" width="22" height="20"><circle cx="8" cy="11" r="6.3" fill="#25324d" stroke="#548af7" stroke-width="1.3"/><circle cx="8" cy="11" r="3" fill="#25324d" stroke="#548af7" stroke-width="1.3"/><path d="M15.5 10 V1.5 M12.5 4.5 L15.5 1.5 L18.5 4.5" stroke="#e05c5c" stroke-width="1.2" fill="none"/></svg>
<svg style="left:44px;top:797px" width="22" height="20"><circle cx="8" cy="11" r="6.3" fill="#25324d" stroke="#548af7" stroke-width="1.3"/><circle cx="8" cy="11" r="3" fill="#25324d" stroke="#548af7" stroke-width="1.3"/><path d="M15.5 10 V1.5 M12.5 4.5 L15.5 1.5 L18.5 4.5" stroke="#e05c5c" stroke-width="1.2" fill="none"/></svg>
<svg style="left:44px;top:852px" width="22" height="20"><circle cx="8" cy="11" r="6.3" fill="#25324d" stroke="#548af7" stroke-width="1.3"/><circle cx="8" cy="11" r="3" fill="#25324d" stroke="#548af7" stroke-width="1.3"/><path d="M15.5 10 V1.5 M12.5 4.5 L15.5 1.5 L18.5 4.5" stroke="#e05c5c" stroke-width="1.2" fill="none"/></svg>
<svg style="left:44px;top:935px" width="22" height="20"><circle cx="8" cy="11" r="6.3" fill="#25324d" stroke="#548af7" stroke-width="1.3"/><circle cx="8" cy="11" r="3" fill="#25324d" stroke="#548af7" stroke-width="1.3"/><path d="M15.5 10 V1.5 M12.5 4.5 L15.5 1.5 L18.5 4.5" stroke="#e05c5c" stroke-width="1.2" fill="none"/></svg>
<svg style="left:354px;top:267px" width="80" height="5"><path d="M0 3 l2 -2.5 l2 2.5 l2 -2.5 l2 2.5 l2 -2.5 l2 2.5 l2 -2.5 l2 2.5 l2 -2.5 l2 2.5 l2 -2.5 l2 2.5 l2 -2.5 l2 2.5 l2 -2.5 l2 2.5 l2 -2.5 l2 2.5 l2 -2.5 l2 2.5 l2 -2.5 l2 2.5 l2 -2.5 l2 2.5 l2 -2.5 l2 2.5 l2 -2.5 l2 2.5 l2 -2.5 l2 2.5 l2 -2.5 l2 2.5 l2 -2.5 l2 2.5 l2 -2.5 l2 2.5 l2 -2.5 l2 2.5 l2 -2.5 l2 2.5" stroke="#c94f4f" stroke-width="1.3" fill="none"/></svg>
<svg style="left:154px;top:404px" width="160" height="5"><path d="M0 3 l2 -2.5 l2 2.5 l2 -2.5 l2 2.5 l2 -2.5 l2 2.5 l2 -2.5 l2 2.5 l2 -2.5 l2 2.5 l2 -2.5 l2 2.5 l2 -2.5 l2 2.5 l2 -2.5 l2 2.5 l2 -2.5 l2 2.5 l2 -2.5 l2 2.5 l2 -2.5 l2 2.5 l2 -2.5 l2 2.5 l2 -2.5 l2 2.5 l2 -2.5 l2 2.5 l2 -2.5 l2 2.5 l2 -2.5 l2 2.5 l2 -2.5 l2 2.5 l2 -2.5 l2 2.5 l2 -2.5 l2 2.5 l2 -2.5 l2 2.5 l2 -2.5 l2 2.5 l2 -2.5 l2 2.5 l2 -2.5 l2 2.5 l2 -2.5 l2 2.5 l2 -2.5 l2 2.5 l2 -2.5 l2 2.5 l2 -2.5 l2 2.5 l2 -2.5 l2 2.5 l2 -2.5 l2 2.5 l2 -2.5 l2 2.5 l2 -2.5 l2 2.5 l2 -2.5 l2 2.5 l2 -2.5 l2 2.5 l2 -2.5 l2 2.5 l2 -2.5 l2 2.5 l2 -2.5 l2 2.5 l2 -2.5 l2 2.5 l2 -2.5 l2 2.5 l2 -2.5 l2 2.5 l2 -2.5 l2 2.5" stroke="#c9a43a" stroke-width="1.3" fill="none"/></svg>
<svg style="left:314px;top:432px" width="20" height="5"><path d="M0 3 l2 -2.5 l2 2.5 l2 -2.5 l2 2.5 l2 -2.5 l2 2.5 l2 -2.5 l2 2.5 l2 -2.5 l2 2.5" stroke="#c94f4f" stroke-width="1.3" fill="none"/></svg>
<svg style="left:354px;top:459px" width="20" height="5"><path d="M0 3 l2 -2.5 l2 2.5 l2 -2.5 l2 2.5 l2 -2.5 l2 2.5 l2 -2.5 l2 2.5 l2 -2.5 l2 2.5" stroke="#c94f4f" stroke-width="1.3" fill="none"/></svg>
<svg style="left:594px;top:762px" width="270" height="5"><path d="M0 3 l2 -2.5 l2 2.5 l2 -2.5 l2 2.5 l2 -2.5 l2 2.5 l2 -2.5 l2 2.5 l2 -2.5 l2 2.5 l2 -2.5 l2 2.5 l2 -2.5 l2 2.5 l2 -2.5 l2 2.5 l2 -2.5 l2 2.5 l2 -2.5 l2 2.5 l2 -2.5 l2 2.5 l2 -2.5 l2 2.5 l2 -2.5 l2 2.5 l2 -2.5 l2 2.5 l2 -2.5 l2 2.5 l2 -2.5 l2 2.5 l2 -2.5 l2 2.5 l2 -2.5 l2 2.5 l2 -2.5 l2 2.5 l2 -2.5 l2 2.5 l2 -2.5 l2 2.5 l2 -2.5 l2 2.5 l2 -2.5 l2 2.5 l2 -2.5 l2 2.5 l2 -2.5 l2 2.5 l2 -2.5 l2 2.5 l2 -2.5 l2 2.5 l2 -2.5 l2 2.5 l2 -2.5 l2 2.5 l2 -2.5 l2 2.5 l2 -2.5 l2 2.5 l2 -2.5 l2 2.5 l2 -2.5 l2 2.5 l2 -2.5 l2 2.5 l2 -2.5 l2 2.5 l2 -2.5 l2 2.5 l2 -2.5 l2 2.5 l2 -2.5 l2 2.5 l2 -2.5 l2 2.5 l2 -2.5 l2 2.5 l2 -2.5 l2 2.5 l2 -2.5 l2 2.5 l2 -2.5 l2 2.5 l2 -2.5 l2 2.5 l2 -2.5 l2 2.5 l2 -2.5 l2 2.5 l2 -2.5 l2 2.5 l2 -2.5 l2 2.5 l2 -2.5 l2 2.5 l2 -2.5 l2 2.5 l2 -2.5 l2 2.5 l2 -2.5 l2 2.5 l2 -2.5 l2 2.5 l2 -2.5 l2 2.5 l2 -2.5 l2 2.5 l2 -2.5 l2 2.5 l2 -2.5 l2 2.5 l2 -2.5 l2 2.5 l2 -2.5 l2 2.5 l2 -2.5 l2 2.5 l2 -2.5 l2 2.5 l2 -2.5 l2 2.5 l2 -2.5 l2 2.5 l2 -2.5 l2 2.5 l2 -2.5 l2 2.5 l2 -2.5 l2 2.5 l2 -2.5 l2 2.5 l2 -2.5" stroke="#c94f4f" stroke-width="1.3" fill="none"/></svg>
<svg style="left:584px;top:789px" width="300" height="5"><path d="M0 3 l2 -2.5 l2 2.5 l2 -2.5 l2 2.5 l2 -2.5 l2 2.5 l2 -2.5 l2 2.5 l2 -2.5 l2 2.5 l2 -2.5 l2 2.5 l2 -2.5 l2 2.5 l2 -2.5 l2 2.5 l2 -2.5 l2 2.5 l2 -2.5 l2 2.5 l2 -2.5 l2 2.5 l2 -2.5 l2 2.5 l2 -2.5 l2 2.5 l2 -2.5 l2 2.5 l2 -2.5 l2 2.5 l2 -2.5 l2 2.5 l2 -2.5 l2 2.5 l2 -2.5 l2 2.5 l2 -2.5 l2 2.5 l2 -2.5 l2 2.5 l2 -2.5 l2 2.5 l2 -2.5 l2 2.5 l2 -2.5 l2 2.5 l2 -2.5 l2 2.5 l2 -2.5 l2 2.5 l2 -2.5 l2 2.5 l2 -2.5 l2 2.5 l2 -2.5 l2 2.5 l2 -2.5 l2 2.5 l2 -2.5 l2 2.5 l2 -2.5 l2 2.5 l2 -2.5 l2 2.5 l2 -2.5 l2 2.5 l2 -2.5 l2 2.5 l2 -2.5 l2 2.5 l2 -2.5 l2 2.5 l2 -2.5 l2 2.5 l2 -2.5 l2 2.5 l2 -2.5 l2 2.5 l2 -2.5 l2 2.5 l2 -2.5 l2 2.5 l2 -2.5 l2 2.5 l2 -2.5 l2 2.5 l2 -2.5 l2 2.5 l2 -2.5 l2 2.5 l2 -2.5 l2 2.5 l2 -2.5 l2 2.5 l2 -2.5 l2 2.5 l2 -2.5 l2 2.5 l2 -2.5 l2 2.5 l2 -2.5 l2 2.5 l2 -2.5 l2 2.5 l2 -2.5 l2 2.5 l2 -2.5 l2 2.5 l2 -2.5 l2 2.5 l2 -2.5 l2 2.5 l2 -2.5 l2 2.5 l2 -2.5 l2 2.5 l2 -2.5 l2 2.5 l2 -2.5 l2 2.5 l2 -2.5 l2 2.5 l2 -2.5 l2 2.5 l2 -2.5 l2 2.5 l2 -2.5 l2 2.5 l2 -2.5 l2 2.5 l2 -2.5 l2 2.5 l2 -2.5 l2 2.5 l2 -2.5 l2 2.5 l2 -2.5 l2 2.5 l2 -2.5 l2 2.5 l2 -2.5 l2 2.5 l2 -2.5 l2 2.5 l2 -2.5 l2 2.5 l2 -2.5 l2 2.5 l2 -2.5 l2 2.5" stroke="#c94f4f" stroke-width="1.3" fill="none"/></svg>
<svg style="left:634px;top:817px" width="300" height="5"><path d="M0 3 l2 -2.5 l2 2.5 l2 -2.5 l2 2.5 l2 -2.5 l2 2.5 l2 -2.5 l2 2.5 l2 -2.5 l2 2.5 l2 -2.5 l2 2.5 l2 -2.5 l2 2.5 l2 -2.5 l2 2.5 l2 -2.5 l2 2.5 l2 -2.5 l2 2.5 l2 -2.5 l2 2.5 l2 -2.5 l2 2.5 l2 -2.5 l2 2.5 l2 -2.5 l2 2.5 l2 -2.5 l2 2.5 l2 -2.5 l2 2.5 l2 -2.5 l2 2.5 l2 -2.5 l2 2.5 l2 -2.5 l2 2.5 l2 -2.5 l2 2.5 l2 -2.5 l2 2.5 l2 -2.5 l2 2.5 l2 -2.5 l2 2.5 l2 -2.5 l2 2.5 l2 -2.5 l2 2.5 l2 -2.5 l2 2.5 l2 -2.5 l2 2.5 l2 -2.5 l2 2.5 l2 -2.5 l2 2.5 l2 -2.5 l2 2.5 l2 -2.5 l2 2.5 l2 -2.5 l2 2.5 l2 -2.5 l2 2.5 l2 -2.5 l2 2.5 l2 -2.5 l2 2.5 l2 -2.5 l2 2.5 l2 -2.5 l2 2.5 l2 -2.5 l2 2.5 l2 -2.5 l2 2.5 l2 -2.5 l2 2.5 l2 -2.5 l2 2.5 l2 -2.5 l2 2.5 l2 -2.5 l2 2.5 l2 -2.5 l2 2.5 l2 -2.5 l2 2.5 l2 -2.5 l2 2.5 l2 -2.5 l2 2.5 l2 -2.5 l2 2.5 l2 -2.5 l2 2.5 l2 -2.5 l2 2.5 l2 -2.5 l2 2.5 l2 -2.5 l2 2.5 l2 -2.5 l2 2.5 l2 -2.5 l2 2.5 l2 -2.5 l2 2.5 l2 -2.5 l2 2.5 l2 -2.5 l2 2.5 l2 -2.5 l2 2.5 l2 -2.5 l2 2.5 l2 -2.5 l2 2.5 l2 -2.5 l2 2.5 l2 -2.5 l2 2.5 l2 -2.5 l2 2.5 l2 -2.5 l2 2.5 l2 -2.5 l2 2.5 l2 -2.5 l2 2.5 l2 -2.5 l2 2.5 l2 -2.5 l2 2.5 l2 -2.5 l2 2.5 l2 -2.5 l2 2.5 l2 -2.5 l2 2.5 l2 -2.5 l2 2.5 l2 -2.5 l2 2.5 l2 -2.5 l2 2.5 l2 -2.5 l2 2.5" stroke="#c94f4f" stroke-width="1.3" fill="none"/></svg>
<svg style="left:334px;top:954px" width="80" height="5"><path d="M0 3 l2 -2.5 l2 2.5 l2 -2.5 l2 2.5 l2 -2.5 l2 2.5 l2 -2.5 l2 2.5 l2 -2.5 l2 2.5 l2 -2.5 l2 2.5 l2 -2.5 l2 2.5 l2 -2.5 l2 2.5 l2 -2.5 l2 2.5 l2 -2.5 l2 2.5 l2 -2.5 l2 2.5 l2 -2.5 l2 2.5 l2 -2.5 l2 2.5 l2 -2.5 l2 2.5 l2 -2.5 l2 2.5 l2 -2.5 l2 2.5 l2 -2.5 l2 2.5 l2 -2.5 l2 2.5 l2 -2.5 l2 2.5 l2 -2.5 l2 2.5" stroke="#c94f4f" stroke-width="1.3" fill="none"/></svg>
<svg style="left:1085px;top:59px" width="18" height="18"><circle cx="9" cy="9" r="7.8" fill="#db5c6a"/><path d="M9 4.5 v5.5" stroke="#1e1f22" stroke-width="1.9"/><circle cx="9" cy="12.8" r="1.1" fill="#1e1f22"/></svg>
<div class="a" style="left:1105px;top:56px;line-height:24px;font-size:15px;color:#b4b8bf">8</div>
<svg style="left:1123px;top:59px" width="18" height="18"><path d="M9 2 L16 14.5 H2 Z" fill="#d6ae58" stroke="#d6ae58" stroke-width="2" stroke-linejoin="round"/><path d="M9 6.5 v4" stroke="#1e1f22" stroke-width="1.8"/><circle cx="9" cy="13" r="1" fill="#1e1f22"/></svg>
<div class="a" style="left:1143px;top:56px;line-height:24px;font-size:15px;color:#b4b8bf">4</div>
<svg style="left:1163px;top:63px" width="14" height="9"><path d="M1.5 7 L7 1.5 L12.5 7" stroke="#aeb0b6" stroke-width="1.3" fill="none"/></svg>
<svg style="left:1189px;top:63px" width="14" height="9"><path d="M1.5 1.5 L7 7 L12.5 1.5" stroke="#aeb0b6" stroke-width="1.3" fill="none"/></svg>
<div class="a" style="left:1200px;top:85px;width:10px;height:200px;background:#3e4044;border-radius:0"></div>
<div class="a" style="left:1194px;top:125px;width:18px;height:3px;background:#e55765"></div>
<div class="a" style="left:1194px;top:155px;width:18px;height:3px;background:#d9a343"></div>
<div class="a" style="left:1194px;top:160px;width:18px;height:3px;background:#e55765"></div>
<div class="a" style="left:1194px;top:166px;width:18px;height:3px;background:#e55765"></div>
<div class="a" style="left:1194px;top:230px;width:18px;height:3px;background:#e55765"></div>
<div class="a" style="left:1194px;top:236px;width:18px;height:3px;background:#e55765"></div>
<div class="a" style="left:1194px;top:242px;width:18px;height:3px;background:#e55765"></div>
<div class="a" style="left:1194px;top:271px;width:18px;height:3px;background:#e55765"></div>
<div class="a" style="left:1194px;top:300px;width:18px;height:3px;background:#d9a343"></div>
<div class="a" style="left:1194px;top:312px;width:18px;height:3px;background:#8fae3f"></div>
<div class="a" style="left:1194px;top:644px;width:18px;height:3px;background:#d9a343"></div>
<div class="a" style="left:1194px;top:335px;width:18px;height:28px;background:#d8505f"></div>
<div class="a" style="left:95px;top:1003px;width:665px;height:10px;background:#3e4044"></div>
<div class="a" style="left:0;top:1015px;width:1213px;height:1px;background:#313438"></div>
<div class="a" style="left:14px;top:1019px;line-height:24px;color:#a8abb0">app</div>
<svg style="left:57px;top:1026px" width="8" height="10"><path d="M1.5 1 L5.5 5 L1.5 9" stroke="#6f737a" stroke-width="1.2" fill="none"/></svg>
<div class="a" style="left:74px;top:1019px;line-height:24px;color:#a8abb0">androidCompileSdk()</div>
</div>
<div class="vline" style="left:1768px;top:51px;height:1046px"></div>
<div id="emu" class="a"></div>
<div class="a" style="left:1769px;top:101px;width:580px;height:1px;background:#1e1f22"></div>
<div class="a" style="left:1769px;top:145px;width:580px;height:1px;background:#1e1f22"></div>
<div class="a" style="left:1771px;top:98px;width:199px;height:4px;border-radius:2px;background:#5a5d63"></div>
<svg style="left:1785px;top:66px" width="24" height="22"><path d="M5.5 18 H2.5 V4 a0.8 0.8 0 0 1 0.8-0.8 H11 a0.8 0.8 0 0 1 0.8 0.8 V9" stroke="#ced0d6" stroke-width="1.3" fill="none"/><path d="M6 6 h2" stroke="#ced0d6" stroke-width="1.2"/><rect x="7.5" y="10.5" width="10" height="6.5" rx="1.2" stroke="#b68bf0" stroke-width="1.4" fill="none"/><path d="M7.5 19.5 h9" stroke="#b68bf0" stroke-width="1.3"/><circle cx="16.5" cy="18" r="2.2" fill="#22dd22"/></svg>
<div class="a" style="left:1809px;top:65.5px;line-height:24px">java-test API 35</div>
<svg style="left:1945px;top:70px" width="14" height="14"><path d="M2 2 L12 12 M12 2 L2 12" stroke="#8c8f94" stroke-width="1.4"/></svg>
<svg style="left:1978px;top:67px" width="18" height="18"><path d="M9 1 V17 M1 9 H17" stroke="#dfe1e5" stroke-width="1.6"/></svg>
<svg style="left:2247px;top:67px" width="20" height="20"><path d="M8 3 H2.5 V17.5 H17 V12 M11 2.5 H17.5 V9 M17.5 2.5 L9 11" stroke="#dfe1e5" stroke-width="1.5" fill="none"/></svg>
<svg style="left:2284px;top:64px" width="12" height="24"><g fill="#dfe1e5"><circle cx="6" cy="6" r="1.7"/><circle cx="6" cy="12.5" r="1.7"/><circle cx="6" cy="19" r="1.7"/></g></svg>
<svg style="left:2313px;top:75px" width="18" height="4"><path d="M1 2 H17" stroke="#dfe1e5" stroke-width="1.6"/></svg>
<svg style="left:1780px;top:111px" width="26" height="26"><g stroke="#dfe1e5" stroke-width="1.5" fill="none" stroke-linejoin="round" stroke-linecap="round"><path d="M8.5 7.5 a7 7 0 1 0 9 0"/><path d="M13 4 v8"/></g></svg>
<svg style="left:1812px;top:111px" width="26" height="26"><g stroke="#dfe1e5" stroke-width="1.5" fill="none" stroke-linejoin="round" stroke-linecap="round"><path d="M4 10 h3.5 l5-4.5 v15 l-5-4.5 H4 Z"/><path d="M16 10 q2 3 0 6 M19 7.5 q4 5.5 0 11"/></g></svg>
<svg style="left:1844px;top:111px" width="26" height="26"><g stroke="#dfe1e5" stroke-width="1.5" fill="none" stroke-linejoin="round" stroke-linecap="round"><path d="M5 10 h3.5 l5-4.5 v15 l-5-4.5 H5 Z"/><path d="M17 10 q2 3 0 6"/></g></svg>
<div class="a" style="left:1879px;top:111px;width:1px;height:25px;background:#43454a"></div>
<svg style="left:1886px;top:111px" width="26" height="26"><g stroke="#dfe1e5" stroke-width="1.5" fill="none" stroke-linejoin="round" stroke-linecap="round"><rect x="5" y="4.5" width="10" height="15" rx="1.5"/><path d="M9 7.5 h2" stroke-width="1.2"/><path d="M17 6 q5.5 2 5.5 7.5 q0 5-5 6.5" stroke="#548af7"/><path d="M16.5 9.5 V5.5 H20.5" stroke="#548af7"/></g></svg>
<svg style="left:1920px;top:111px" width="26" height="26"><g stroke="#dfe1e5" stroke-width="1.5" fill="none" stroke-linejoin="round" stroke-linecap="round"><rect x="11" y="4.5" width="10" height="15" rx="1.5"/><path d="M15 7.5 h2" stroke-width="1.2"/><path d="M9 6 q-5.5 2 -5.5 7.5 q0 5 5 6.5" stroke="#548af7"/><path d="M9.5 9.5 V5.5 H5.5" stroke="#548af7"/></g></svg>
<div class="a" style="left:1953px;top:111px;width:1px;height:25px;background:#43454a"></div>
<svg style="left:1961px;top:111px" width="26" height="26"><g stroke="#dfe1e5" stroke-width="1.5" fill="none" stroke-linejoin="round" stroke-linecap="round"><path d="M17.5 7 L8 12.5 L17.5 18 Z"/></g></svg>
<svg style="left:1993px;top:111px" width="26" height="26"><g stroke="#dfe1e5" stroke-width="1.5" fill="none" stroke-linejoin="round" stroke-linecap="round"><circle cx="13" cy="12.5" r="6.3"/></g></svg>
<svg style="left:2025px;top:111px" width="26" height="26"><g stroke="#dfe1e5" stroke-width="1.5" fill="none" stroke-linejoin="round" stroke-linecap="round"><rect x="8.5" y="8" width="9.5" height="9.5" rx="1"/></g></svg>
<div class="a" style="left:2060px;top:111px;width:1px;height:25px;background:#43454a"></div>
<svg style="left:2066px;top:111px" width="28" height="26"><g stroke="#dfe1e5" stroke-width="1.5" fill="none" stroke-linejoin="round" stroke-linecap="round"><path d="M15 16 H7 a2 2 0 0 1 -2-2 V7 a2 2 0 0 1 2-2 h12 a2 2 0 0 1 2 2 v3.5"/><path d="M8.5 8.3 h0.6 M11 8.3 h0.6 M13.5 8.3 h0.6 M16 8.3 h0.6 M9.5 10.8 h0.6 M12 10.8 h0.6 M14.5 10.8 h0.6 M9.5 13.3 h4.5" stroke-width="1.2"/><rect x="16.5" y="13" width="6" height="8.5" rx="2.5"/><path d="M19.5 15 v2" stroke-width="1.1"/></g></svg>
<div class="a" style="left:2100px;top:111px;width:1px;height:25px;background:#43454a"></div>
<svg style="left:2109px;top:111px" width="26" height="26"><g stroke="#dfe1e5" stroke-width="1.5" fill="none" stroke-linejoin="round" stroke-linecap="round"><path d="M11.5 20 H7 V5 h10 v6"/><path d="M10.5 7.5 h3" stroke-width="1.2"/><path d="M20.00 16.40 L21.50 17.04 L21.50 18.96 L20.00 19.60 L19.88 19.80 L20.08 21.42 L18.42 22.37 L17.12 21.40 L16.88 21.40 L15.58 22.37 L13.92 21.42 L14.12 19.80 L14.00 19.60 L12.50 18.96 L12.50 17.04 L14.00 16.40 L14.12 16.20 L13.92 14.58 L15.58 13.63 L16.88 14.60 L17.12 14.60 L18.42 13.63 L20.08 14.58 L19.88 16.20 Z" stroke-width="1.3"/><circle cx="17" cy="18" r="1" fill="#dfe1e5" stroke="none"/></g></svg>
<div class="a" style="left:2141px;top:111px;width:1px;height:25px;background:#43454a"></div>
<svg style="left:2149px;top:111px" width="26" height="26"><g stroke="#dfe1e5" stroke-width="1.5" fill="none" stroke-linejoin="round" stroke-linecap="round"><path d="M4 9 a2 2 0 0 1 2-2 h3 l2-2.5 h5 l2 2.5 h2 a2 2 0 0 1 2 2 v10 a2 2 0 0 1 -2 2 H6 a2 2 0 0 1 -2-2 Z"/><circle cx="13" cy="13.5" r="3.5"/></g></svg>
<svg style="left:2182px;top:111px" width="26" height="26"><g stroke="#dfe1e5" stroke-width="1.5" fill="none" stroke-linejoin="round" stroke-linecap="round"><rect x="3" y="7" width="14" height="12" rx="2"/><path d="M17 11 l6-4 v12 l-6-4"/></g></svg>
<div class="a" style="left:2215px;top:111px;width:1px;height:25px;background:#43454a"></div>
<svg style="left:2223px;top:111px" width="26" height="26"><g stroke="#dfe1e5" stroke-width="1.5" fill="none" stroke-linejoin="round" stroke-linecap="round"><path d="M6 9 a8 8 0 1 1 -0.5 7"/><path d="M4.5 5 v4.5 h4.5"/><path d="M13 9 v4 h3"/></g></svg>
<svg style="left:2263px;top:111px" width="12" height="24"><g fill="#dfe1e5"><circle cx="6" cy="4" r="1.7"/><circle cx="6" cy="11" r="1.7"/><circle cx="6" cy="18" r="1.7"/></g></svg>
<svg style="left:2310px;top:111px" width="26" height="26"><g stroke="#dfe1e5" stroke-width="1.5" fill="none" stroke-linejoin="round" stroke-linecap="round"><path d="M7 18 H4 V5 h16 v4"/><path d="M7 8 h16 v4"/><circle cx="16" cy="16" r="4"/><path d="M19 19 l4 4"/></g></svg>
<div class="a" style="left:1845px;top:146px;width:428px;height:950px;background:#ffffff"></div>
<div class="a" style="left:1845px;top:146px;width:428px;height:25px;background:#000"></div>
<div class="a" style="left:1845px;top:1071px;width:428px;height:26px;background:#000"></div>
<div class="a" style="left:2003px;top:1081px;width:112px;height:4px;border-radius:2px;background:#fff"></div>
<div class="a" style="left:1862px;top:150px;font-size:15px;line-height:18px;color:#fff">4:23</div>
<svg style="left:2196px;top:150px" width="50" height="18"><path d="M1.5 5.3 Q9.2 -1.2 17 5.3 L9.2 15 Z" fill="#fff"/><path d="M18 15 L31.5 2 V15 Z" fill="#fff"/><rect x="39" y="3" width="8" height="12" rx="0.8" fill="#fff"/><rect x="41" y="1.8" width="4" height="2" rx="0.5" fill="#fff"/></svg>
<div class="a" style="left:1846px;top:601px;width:427px;text-align:center;font-size:32.5px;line-height:44px;color:#2ea84f">Hello, World Java!</div>
<div class="a" style="left:2293px;top:935px;width:35px;height:135px;border:1px solid #3c3e42;border-radius:5px"></div>
<svg style="left:2300px;top:944px" width="18" height="18"><path d="M9 1 V17 M1 9 H17" stroke="#dfe1e5" stroke-width="1.5"/></svg>
<div class="a" style="left:2301px;top:985px;width:17px;height:1px;background:#5a5d63"></div>
<div class="a" style="left:2292px;top:1007px;width:35px;text-align:center;font-size:14px;font-weight:bold;line-height:22px;color:#dfe1e5">1:1</div>
<svg style="left:2300px;top:1042px" width="18" height="18"><rect x="1" y="2" width="16" height="14" rx="2.5" stroke="#5a5d63" stroke-width="1.3" fill="none"/><path d="M5 9 V6 H8 M10 12 H13 V9" stroke="#5a5d63" stroke-width="1.2" fill="none"/></svg>
<div id="rstripe" class="a"></div><div class="vline" style="left:2349px;top:51px;height:1263px"></div>
<svg style="left:2360px;top:60px" width="30" height="32"><path d="M6 21.5 c1.5-1.5 2.5-3 2.5-6 v-2.5 c0-4 2.8-7 6.5-7 s6.5 3 6.5 7 v2.5 c0 3 1 4.5 2.5 6 Z" stroke="#dfe1e5" stroke-width="1.6" fill="none" stroke-linejoin="round"/><path d="M13 25 h4" stroke="#dfe1e5" stroke-width="1.8" stroke-linecap="round"/><circle cx="23.5" cy="8" r="4" fill="#548af7"/></svg>
<svg style="left:2360px;top:112px" width="30" height="30"><g stroke="#dfe1e5" stroke-width="1.6" fill="none" stroke-linejoin="round"><path d="M10 23 H6 V4 h11 v6"/><path d="M9 7 h3"/><path d="M13 24 a6 6 0 0 1 12 0 Z"/><path d="M16 17.5 l-1-2 M22 17.5 l1-2"/></g></svg>
<div class="a" style="left:2356px;top:158px;width:38px;height:38px;border-radius:7px;background:#43454a"></div>
<svg style="left:2360px;top:162px" width="30" height="30"><g stroke="#dfe1e5" stroke-width="1.6" fill="none" stroke-linejoin="round"><path d="M9 20 H6 V6 h10 v3"/><path d="M9 8 h3"/><rect x="10" y="13" width="14" height="8" rx="1.5"/><path d="M10 24.5 h14"/></g><circle cx="23" cy="8.5" r="3.5" fill="#5fb865"/></svg>
<svg style="left:2362px;top:213px" width="26" height="26"><path d="M13 1 Q14.5 11.5 25 13 Q14.5 14.5 13 25 Q11.5 14.5 1 13 Q11.5 11.5 13 1 Z" fill="#dfe1e5"/></svg>
<svg style="left:2360px;top:261px" width="30" height="30"><g stroke="#dfe1e5" stroke-width="1.6" fill="none" stroke-linecap="round"><path d="M5 3.5 V26.5 M25 3.5 V26.5 M10.5 10.5 h10 M17 7 l3.5 3.5 l-3.5 3.5 M20 19.5 h-10 M13.5 16 l-3.5 3.5 l3.5 3.5"/></g></svg>
<div class="hline" style="left:51px;top:1096px;width:2298px"></div>
<div class="a" style="left:51px;top:1097px;width:2298px;height:51px;background:#2b2d30"></div>
<div class="a" style="left:51px;top:1148px;width:2298px;height:166px;background:#1e1f22"></div>
<div class="a" style="left:67px;top:1111.5px;line-height:24px;font-weight:bold">Terminal</div>
<div class="a" style="left:174px;top:1111.5px;line-height:24px">Local</div>
<svg style="left:229px;top:1116px" width="14" height="14"><path d="M2 2 L12 12 M12 2 L2 12" stroke="#8c8f94" stroke-width="1.4"/></svg>
<svg style="left:261px;top:1113px" width="18" height="18"><path d="M9 1 V17 M1 9 H17" stroke="#dfe1e5" stroke-width="1.5"/></svg>
<svg style="left:297px;top:1118px" width="14" height="9"><path d="M1 1.5 L7 7.5 L13 1.5" stroke="#dfe1e5" stroke-width="1.5" fill="none"/></svg>
<div class="a" style="left:159px;top:1145px;width:96px;height:4px;border-radius:2px;background:#3574f0"></div>
<svg style="left:2283px;top:1110px" width="12" height="24"><g fill="#dfe1e5"><circle cx="6" cy="6" r="1.7"/><circle cx="6" cy="12.5" r="1.7"/><circle cx="6" cy="19" r="1.7"/></g></svg>
<svg style="left:2313px;top:1121px" width="18" height="4"><path d="M1 2 H17" stroke="#dfe1e5" stroke-width="1.6"/></svg>
<div class="tline" style="left:57px;top:1150.5px"><span style="color:#5fa832;font-weight:bold">test@192</span>:<span style="color:#5fa832;font-weight:bold">~/projects/testandroid</span>$ ./mill show app.androidInstall</div>
<div class="tline" style="left:57px;top:1173.1px"><span style="color:#3592c4">[1/1] show</span></div>
<div class="tline" style="left:57px;top:1195.7px">All files should be loaded. Notifying the device.</div>
<div class="tline" style="left:57px;top:1218.3px">"emulator-5554"</div>
<div class="tline" style="left:57px;top:1240.9px">[1/1] ============================== show app.androidInstall ============================== 2s</div>
<div class="tline" style="left:57px;top:1263.5px"><span style="color:#5fa832;font-weight:bold">test@192</span>:<span style="color:#5fa832;font-weight:bold">~/projects/testandroid</span>$ </div>
<div class="a" style="left:386px;top:1261px;width:10px;height:22px;background:#cdcfd4"></div>
<div class="hline" style="left:0;top:1313px;width:2400px"></div>
<div id="status" class="a"></div>
<svg style="left:16px;top:1324px" width="12" height="14"><rect x="1.5" y="2.5" width="9" height="9" rx="2" stroke="#548af7" stroke-width="1.5" fill="#25324d"/></svg>
<div class="a" style="left:33px;top:1318px;line-height:24px;color:#a8abb0">testandroid</div>
<svg style="left:132px;top:1325px" width="8" height="12"><path d="M1.5 1 L6.5 6 L1.5 11" stroke="#8c8f94" stroke-width="1.4" fill="none"/></svg>
<div class="a" style="left:151px;top:1318px;line-height:24px;color:#a8abb0">.bsp</div>
<svg style="left:193px;top:1325px" width="8" height="12"><path d="M1.5 1 L6.5 6 L1.5 11" stroke="#8c8f94" stroke-width="1.4" fill="none"/></svg>
<svg style="left:217px;top:1322px" width="20" height="18"><path d="M7.5 1.5 c-2 0-3 0.8-3 2.5 v2.5 c0 1.3-0.9 2.2-2.8 2.5 c1.9 0.3 2.8 1.2 2.8 2.5 v2.5 c0 1.7 1 2.5 3 2.5 M10.5 1.5 c2 0 3 0.8 3 2.5 v2.5 c0 1.3 0.9 2.2 2.8 2.5 c-1.9 0.3-2.8 1.2-2.8 2.5 v2.5 c0 1.7-1 2.5-3 2.5" stroke="#b68bf0" stroke-width="1.4" fill="none" stroke-linejoin="round"/></svg>
<div class="a" style="left:240px;top:1318px;line-height:24px;color:#a8abb0">mill-bsp.json</div>
<svg style="left:1928px;top:1319px" width="24" height="22"><path d="M10 4 Q11 11 18 12 Q11 13 10 20 Q9 13 2 12 Q9 11 10 4 Z" fill="#dfe1e5"/><circle cx="17" cy="5.5" r="4" stroke="#dfe1e5" stroke-width="1.3" fill="#2b2d30"/><path d="M14.5 8 L19.5 3" stroke="#dfe1e5" stroke-width="1.2"/></svg>
<svg style="left:1967px;top:1320px" width="24" height="22"><path d="M3.5 2 V20 M20 2 V20" stroke="#548af7" stroke-width="1.6"/><path d="M6 7.5 h8 M11 4.5 l3 3 l-3 3 M18 15.5 h-8.5 M12.5 12.5 l-3 3 l3 3" stroke="#dfe1e5" stroke-width="1.4" fill="none"/></svg>
<svg style="left:2007px;top:1320px" width="24" height="22"><rect x="3.5" y="4" width="16.5" height="15" rx="2" fill="#253627"/><path d="M6.5 4 H5 a1.5 1.5 0 0 0 -1.5 1.5 V17.5 a1.5 1.5 0 0 0 1.5 1.5 H6.5 M17 4 H18.5 a1.5 1.5 0 0 1 1.5 1.5 V17.5 a1.5 1.5 0 0 1 -1.5 1.5 H17" stroke="#55b467" stroke-width="1.3" fill="none"/><path d="M8 6.5 h7.5 M11.75 6.5 v9.5" stroke="#dfe1e5" stroke-width="1.3"/></svg>
<svg style="left:2047px;top:1319px" width="24" height="24"><circle cx="11.5" cy="12" r="8.6" stroke="#dfe1e5" stroke-width="1.4" fill="none"/><circle cx="10.8" cy="13.2" r="1.5" stroke="#dfe1e5" stroke-width="1.2" fill="none"/><path d="M12 12 L15.5 8.5" stroke="#dfe1e5" stroke-width="1.3"/></svg>
<div class="a" style="left:2089px;top:1318px;line-height:24px;color:#a8abb0">24:29</div>
<div class="a" style="left:2153px;top:1318px;line-height:24px;color:#a8abb0">LF</div>
<div class="a" style="left:2192px;top:1318px;line-height:24px;color:#a8abb0">UTF-8</div>
<div class="a" style="left:2267px;top:1318px;line-height:24px;color:#a8abb0">2 spaces</div>
<svg style="left:2357px;top:1319px" width="24" height="24"><rect x="3" y="11" width="12" height="9" rx="1.5" stroke="#dfe1e5" stroke-width="1.5" fill="none"/><path d="M13 11 V7 a4 4 0 0 1 8 0 v2" stroke="#dfe1e5" stroke-width="1.5" fill="none"/><path d="M9 14 v3" stroke="#dfe1e5" stroke-width="1.4"/></svg>
</body></html>
